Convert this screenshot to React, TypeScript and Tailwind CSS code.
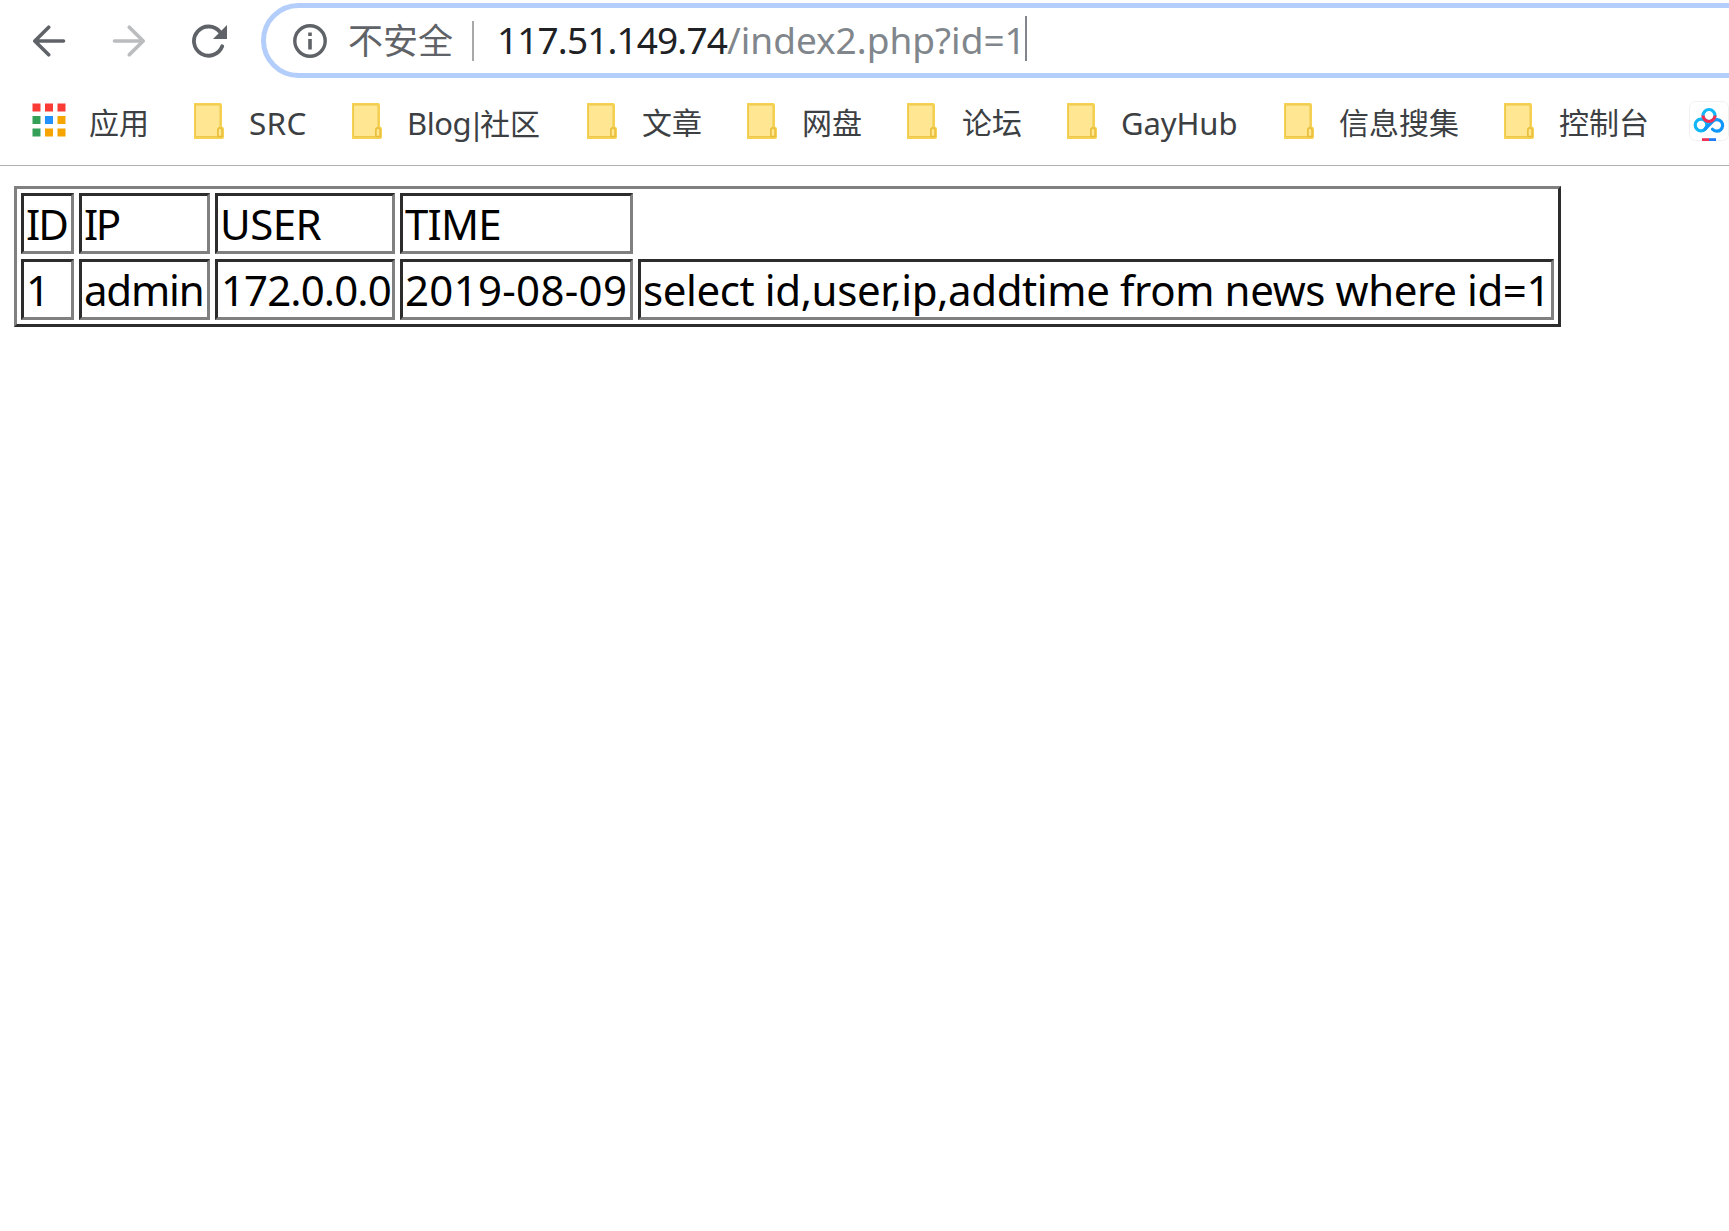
import React from "react";

const bookmarks = [
  { label: "SRC", box: "w-[158px]", text: "ml-[25px] text-[31.5px] tracking-[0.3px]" },
  { label: "Blog|社区", box: "w-[235px]", text: "ml-[25px] text-[31px] tracking-[-0.5px]" },
  { label: "文章", box: "w-[160px]", text: "ml-[25px] text-[30px]" },
  { label: "网盘", box: "w-[160px]", text: "ml-[25px] text-[30px]" },
  { label: "论坛", box: "w-[160px]", text: "ml-[25px] text-[30px]" },
  { label: "GayHub", box: "w-[217px]", text: "ml-[24px] text-[31px] tracking-[-0.1px]" },
  { label: "信息搜集", box: "w-[220px]", text: "ml-[25px] text-[30px]" },
  { label: "控制台", box: "w-[185px]", text: "ml-[25px] text-[30px]" },
];

const header = [
  { label: "ID", text: "tracking-[-2px]" },
  { label: "IP", text: "tracking-[-2.5px]" },
  { label: "USER", text: "tracking-[-0.5px]" },
  { label: "TIME", text: "tracking-[-0.8px]" },
];

const row = [
  { label: "1", text: "" },
  { label: "admin", text: "tracking-[-1.2px]" },
  { label: "172.0.0.0", text: "ml-px tracking-[-0.9px]" },
  { label: "2019-08-09", text: "tracking-[0.3px]" },
  { label: "select id,user,ip,addtime from news where id=1", text: "tracking-[-0.39px]" },
];

function Folder() {
  return (
    <svg className="h-9 w-[30px] shrink-0" viewBox="0 0 30 36" fill="none">
      <path d="M0 0H26.500Q28 0.500 28 2V23.500Q30 24 30 26V34Q30 36 28 36H0Z" fill="#f6d254" />
      <path d="M1.500 2H26V24Q23.500 24.500 23.500 27V33.500H1.500Z" fill="#ffe692" stroke="#eec84a" strokeWidth="1" />
      <path d="M24 33.500V27Q24 25 26 25Q28 25 28 27V33.500Z" fill="#ffe692" stroke="#e8bd38" strokeWidth="1.400" />
    </svg>
  );
}

function Apps() {
  const colors = ["#fb3b36", "#fb3b36", "#fb3b36", "#34a058", "#2490fb", "#f6a400", "#34a058", "#f6a400", "#f6a400"];
  return (
    <svg className="-mt-[2px] h-[34px] w-[34px] shrink-0" viewBox="0 0 34 34">
      {colors.map((c, i) => (
        <rect key={i} x={0.5 + (i % 3) * 12.5} y={0.5 + Math.floor(i / 3) * 12.5} width="8" height="8" fill={c} />
      ))}
    </svg>
  );
}

function Netdisk() {
  return (
    <svg className="h-10 w-10 shrink-0" viewBox="0 0 40 40" fill="none">
      <rect x="0.500" y="0.500" width="39" height="39" rx="6" fill="#fff" stroke="#f1f1f1" />
      <circle cx="12" cy="24" r="5.800" stroke="#12b5f5" strokeWidth="3.200" />
      <path d="M16 28L24 20A5.800 5.800 0 1 1 23.500 28.200" stroke="#1197fb" strokeWidth="3.200" strokeLinecap="round" />
      <circle cx="20" cy="14.500" r="6" stroke="#0fb8fa" strokeWidth="3.200" />
      <path d="M14 14.500A6 6 0 0 0 26 14.500" stroke="#f42d54" strokeWidth="3.200" />
      <path d="M13 37.200H20V40H13Z" fill="#ee3155" />
      <path d="M20 37.200H27V40H20Z" fill="#247bf5" />
    </svg>
  );
}

function BookmarkLabel({ label }: { label: string }) {
  const [first, second] = label.split("|");
  if (second === undefined) return <>{label}</>;
  return (
    <>
      {first}
      <span className="-ml-[3px] tracking-[-5px]">|</span>
      <span className="text-[30px] tracking-normal">{second}</span>
    </>
  );
}

function Cell({ label, text }: { label: string; text: string }) {
  return (
    <div className="flex h-[61px] items-center whitespace-pre border-[3px] border-t-[#2c2c2c] border-r-[#808080] border-b-[#808080] border-l-[#2c2c2c] pl-[2px] text-[42px] leading-[55px] text-black">
      <span className={text}>{label}</span>
    </div>
  );
}

export default function App() {
  return (
    <div className="h-[1231px] w-[1729px] overflow-hidden bg-white font-['Noto_Sans','Noto_Sans_CJK_SC',sans-serif]">
      <div className="flex h-[81px] items-start pt-[3px]">
        <div className="flex h-[75px] w-[261px] shrink-0 items-center pl-8">
          <svg className="h-8 w-[34px] shrink-0" viewBox="0 0 34 32" fill="none" stroke="#5f6368" strokeWidth="3.600" strokeLinecap="round" strokeLinejoin="round">
            <path d="M31.500 16H3M16.700 2.200L2.800 16L16.700 29.800" />
          </svg>
          <svg className="ml-[46px] h-8 w-[34px] shrink-0" viewBox="0 0 34 32" fill="none" stroke="#babcbe" strokeWidth="3.600" strokeLinecap="round" strokeLinejoin="round">
            <path d="M2.500 16H31M17.300 2.200L31.200 16L17.300 29.800" />
          </svg>
          <svg className="ml-[46px] h-[34px] w-[36px] shrink-0" viewBox="0 0 36 34" fill="none">
            <path d="M30.200 22.300A14.600 14.600 0 1 1 28 8" stroke="#5f6368" strokeWidth="3.800" strokeLinecap="round" />
            <path d="M35 1V15H21Z" fill="#5f6368" />
          </svg>
        </div>
        <div className="flex h-[75px] w-[1560px] shrink-0 items-center rounded-[38px] border-[5px] border-[#b3cefb] bg-white pl-[27px]">
          <svg className="mt-px h-[34px] w-[34px] shrink-0" viewBox="0 0 34 34" fill="none">
            <circle cx="17" cy="17" r="15.200" stroke="#5f6368" strokeWidth="3.400" />
            <path d="M15.200 8.500H18.800V12H15.200ZM15.200 15H18.800V25.500H15.200Z" fill="#5f6368" />
          </svg>
          <span className="ml-[21px] w-[106px] whitespace-nowrap text-[35px] leading-[50px] text-[#5f6368]">不安全</span>
          <span className="ml-[18px] h-10 w-[2px] bg-[#a8a8a8]" />
          <span className="-mt-px ml-[23px] w-[528px] whitespace-nowrap text-[37px] leading-[50px] text-[#202124]">
            <span className="tracking-[-0.88px]">117.51.149.74</span>
            <span className="text-[#80868b]">/index2.php?id=1</span>
          </span>
          <span className="-mt-[4px] h-[45px] w-[2px] bg-[#80868b]" />
        </div>
      </div>
      <div className="flex h-[85px] items-start border-b border-[#b0b0b0] pt-[20px]">
        <div className="flex h-10 w-[194px] shrink-0 items-center pl-8">
          <Apps />
          <span className="ml-[23px] mt-1 whitespace-nowrap text-[30px] leading-10 text-[#3c4043]">应用</span>
        </div>
        {bookmarks.map((b) => (
          <div key={b.label} className={`flex h-10 shrink-0 items-center ${b.box}`}>
            <Folder />
            <span className={`mt-1 whitespace-nowrap leading-10 text-[#3c4043] ${b.text}`}>
              <BookmarkLabel label={b.label} />
            </span>
          </div>
        ))}
        <Netdisk />
      </div>
      <div className="ml-[14px] mt-[20px] grid h-[141px] w-[1547px] grid-cols-[53px_131px_180px_233px_916px] content-start gap-[5px] border-[3px] border-t-[#808080] border-r-[#2c2c2c] border-b-[#2c2c2c] border-l-[#808080] p-1">
        {header.map((c) => (
          <Cell key={c.label} {...c} />
        ))}
        <div />
        {row.map((c) => (
          <Cell key={c.label} {...c} />
        ))}
      </div>
    </div>
  );
}
